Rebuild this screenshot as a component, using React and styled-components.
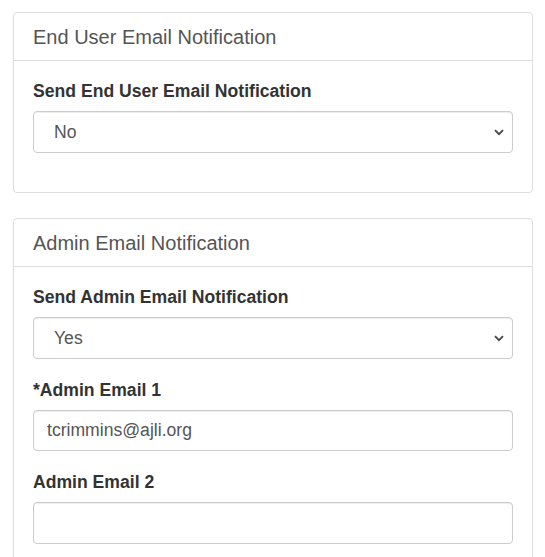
import React from 'react'
import styled, { createGlobalStyle } from 'styled-components'

const GlobalStyle = createGlobalStyle`
  body {
    margin: 0;
    background: #fff;
    font-family: "Liberation Sans", Arial, sans-serif;
  }
`

const Page = styled.div`
  padding: 12px 12px 0 13px;
`

const Panel = styled.div`
  border: 1px solid #ddd;
  border-radius: 4px;
  background: #fff;
  margin-bottom: 25px;
`

const PanelHeading = styled.div`
  padding: 13px 19px 12px;
  border-bottom: 1px solid #ddd;
`

const PanelTitle = styled.h3`
  margin: 0;
  font-size: 20px;
  line-height: 22px;
  font-weight: normal;
  color: #555;
`

const PanelBody = styled.div`
  padding: 18px 19px 20px;
`

const FormGroup = styled.div`
  margin-bottom: 19px;
`

const Label = styled.label`
  display: block;
  font-size: 17.6px;
  line-height: 24px;
  font-weight: bold;
  color: #333;
  margin-bottom: 8px;
`

const SelectWrap = styled.div`
  position: relative;
`

const Select = styled.select`
  appearance: none;
  display: block;
  width: 100%;
  height: 42px;
  padding: 0 30px 0 20px;
  font-family: "Liberation Sans", Arial, sans-serif;
  font-size: 17.6px;
  color: #555;
  background: #fff;
  border: 1px solid #ccc;
  border-radius: 4px;
  box-shadow: inset 0 1px 1px rgba(0, 0, 0, 0.075);
  outline: none;
`

const Chevron = styled.svg`
  position: absolute;
  right: 9px;
  top: 50%;
  margin-top: -3px;
  width: 10px;
  height: 7px;
  pointer-events: none;
`

const Input = styled.input`
  display: block;
  box-sizing: border-box;
  width: 100%;
  height: ${p => (p.$tall ? 42 : 41)}px;
  padding: 0 13px;
  font-family: "Liberation Sans", Arial, sans-serif;
  font-size: 17.6px;
  color: #555;
  background: #fff;
  border: 1px solid #ccc;
  border-radius: 4px;
  box-shadow: inset 0 1px 1px rgba(0, 0, 0, 0.075);
  outline: none;
`

const SelectField = ({ value, options }) => (
  <SelectWrap>
    <Select defaultValue={value}>
      {options.map(o => <option key={o}>{o}</option>)}
    </Select>
    <Chevron viewBox="0 0 10 7">
      <path d="M1 1.2 L5 5.2 L9 1.2" fill="none" stroke="#444" strokeWidth="1.8" />
    </Chevron>
  </SelectWrap>
)

const App = () => (
  <Page>
    <GlobalStyle />
    <Panel>
      <PanelHeading>
        <PanelTitle>End User Email Notification</PanelTitle>
      </PanelHeading>
      <PanelBody>
        <FormGroup>
          <Label>Send End User Email Notification</Label>
          <SelectField value="No" options={['No', 'Yes']} />
        </FormGroup>
      </PanelBody>
    </Panel>
    <Panel>
      <PanelHeading>
        <PanelTitle>Admin Email Notification</PanelTitle>
      </PanelHeading>
      <PanelBody>
        <FormGroup>
          <Label>Send Admin Email Notification</Label>
          <SelectField value="Yes" options={['No', 'Yes']} />
        </FormGroup>
        <FormGroup>
          <Label>*Admin Email 1</Label>
          <Input defaultValue="tcrimmins@ajli.org" />
        </FormGroup>
        <FormGroup>
          <Label>Admin Email 2</Label>
          <Input $tall />
        </FormGroup>
      </PanelBody>
    </Panel>
  </Page>
)

export default App
